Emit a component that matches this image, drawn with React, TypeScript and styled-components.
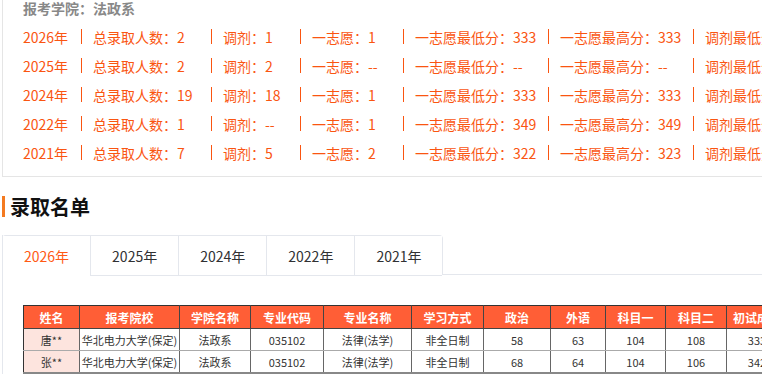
import React, { ReactElement, useState } from 'react'
import styled, { createGlobalStyle } from 'styled-components'

const GlobalStyle = createGlobalStyle`
  html, body {
    margin: 0;
    padding: 0;
    background: #fff;
    overflow: hidden;
  }
  body {
    font-family: "Noto Sans CJK SC", "Noto Sans", sans-serif;
    color: #333;
  }
`

const Page = styled.div`
  width: 762px;
  height: 385px;
  overflow: hidden;
  padding-left: 2px;
  box-sizing: border-box;
`

const StatCard = styled.div`
  border-left: 1px solid #e5e5e5;
  border-bottom: 1px solid #e5e5e5;
  padding: 0 0 9px 20px;
  width: 1000px;
`

const College = styled.div`
  font-size: 14px;
  font-weight: bold;
  color: #888;
  line-height: 16px;
  margin-bottom: 6px;
`

const StatRow = styled.div`
  display: flex;
  align-items: center;
  height: 29px;
  font-size: 14px;
  color: #fa5511;
  white-space: nowrap;
`

const StatItem = styled.span<{ $w?: number }>`
  display: inline-block;
  width: ${(p) => (p.$w ? `${p.$w}px` : 'auto')};
  flex-shrink: 0;
`

const Sep = styled.span`
  display: inline-block;
  width: 1px;
  height: 15px;
  background: #fa5511;
  margin: 0 11px 0 11px;
  flex-shrink: 0;
`

const Title = styled.h2`
  margin: 19px 0 18px 0;
  font-size: 20px;
  font-weight: bold;
  color: #111;
  line-height: 21px;
  border-left: 3px solid #f47a20;
  padding-left: 5px;
`

const Tabs = styled.div`
  border-left: 1px solid #e4e7ed;
`

const TabNav = styled.div`
  display: flex;
  border-bottom: 1px solid #e4e7ed;
  height: 39px;
  margin-left: -1px;
`

const TabList = styled.div`
  display: flex;
  border: 1px solid #e4e7ed;
  border-bottom: none;
  border-radius: 4px 4px 0 0;
  height: 40px;
  box-sizing: border-box;
`

const Tab = styled.div<{ $active: boolean }>`
  padding: 0 21px;
  height: 40px;
  line-height: 40px;
  font-size: 14px;
  color: ${(p) => (p.$active ? '#ff5a14' : '#303133')};
  border-left: 1px solid ${(p) => (p.$active ? 'transparent' : '#e4e7ed')};
  border-bottom: 1px solid ${(p) => (p.$active ? '#fff' : '#e4e7ed')};
  box-sizing: border-box;
  background: #fff;
  cursor: pointer;
  &:first-child {
    border-left: none;
  }
`

const Panel = styled.div`
  padding: 30px 0 0 20px;
`

const Table = styled.table`
  border-collapse: collapse;
  table-layout: fixed;
  width: 753px;
  font-size: 11px;
  border: 1px solid #333;
  border-bottom: 2px solid #888;
`

const Th = styled.th<{ $w: number }>`
  width: ${(p) => p.$w}px;
  background: #ff5e36;
  color: #fff;
  font-size: 12px;
  font-weight: bold;
  height: 22px;
  padding: 0;
  border-right: 1px solid #444;
  border-bottom: 1px solid #444;
  white-space: nowrap;
  overflow: hidden;
`

const Td = styled.td<{ $pink?: boolean }>`
  height: 21px;
  padding: 0;
  text-align: center;
  color: #333;
  background: ${(p) => (p.$pink ? '#fde4de' : '#fff')};
  border-right: 1px solid #666;
  border-bottom: 1px solid #aaa;
  white-space: nowrap;
  overflow: hidden;
`

type Stat = {
  year: string
  total: string
  adjust: string
  first: string
  min: string
  max: string
}

const stats: Stat[] = [
  { year: '2026', total: '2', adjust: '1', first: '1', min: '333', max: '333' },
  { year: '2025', total: '2', adjust: '2', first: '--', min: '--', max: '--' },
  { year: '2024', total: '19', adjust: '18', first: '1', min: '333', max: '333' },
  { year: '2022', total: '1', adjust: '--', first: '1', min: '349', max: '349' },
  { year: '2021', total: '7', adjust: '5', first: '2', min: '322', max: '323' },
]

const columns: [string, number][] = [
  ['姓名', 55],
  ['报考院校', 99],
  ['学院名称', 70],
  ['专业代码', 72],
  ['专业名称', 87],
  ['学习方式', 71],
  ['政治', 66],
  ['外语', 54],
  ['科目一', 59],
  ['科目二', 60],
  ['初试成绩', 60],
]

const students = [
  ['唐**', '华北电力大学(保定)', '法政系', '035102', '法律(法学)', '非全日制', '58', '63', '104', '108', '333'],
  ['张**', '华北电力大学(保定)', '法政系', '035102', '法律(法学)', '非全日制', '68', '64', '104', '106', '342'],
]

function App(): ReactElement {
  const [active, setActive] = useState('2026')
  return (
    <Page>
      <GlobalStyle />
      <StatCard>
        <College>报考学院：法政系</College>
        {stats.map((s) => (
          <StatRow key={s.year}>
            <StatItem $w={47}>{s.year}年</StatItem>
            <Sep />
            <StatItem $w={107}>总录取人数：{s.total}</StatItem>
            <Sep />
            <StatItem $w={66}>调剂：{s.adjust}</StatItem>
            <Sep />
            <StatItem $w={80}>一志愿：{s.first}</StatItem>
            <Sep />
            <StatItem $w={122}>一志愿最低分：{s.min}</StatItem>
            <Sep />
            <StatItem $w={122}>一志愿最高分：{s.max}</StatItem>
            <Sep />
            <StatItem>调剂最低分：--</StatItem>
          </StatRow>
        ))}
      </StatCard>
      <Title>录取名单</Title>
      <Tabs>
        <TabNav>
          <TabList>
            {stats.map((s) => (
              <Tab key={s.year} $active={active === s.year} onClick={() => setActive(s.year)}>
                {s.year}年
              </Tab>
            ))}
          </TabList>
        </TabNav>
        <Panel>
          <Table>
            <thead>
              <tr>
                {columns.map(([name, w]) => (
                  <Th key={name} $w={w}>
                    {name}
                  </Th>
                ))}
              </tr>
            </thead>
            <tbody>
              {students.map((row) => (
                <tr key={row[0]}>
                  {row.map((cell, i) => (
                    <Td key={i} $pink={i === 0}>
                      {cell}
                    </Td>
                  ))}
                </tr>
              ))}
            </tbody>
          </Table>
        </Panel>
      </Tabs>
    </Page>
  )
}

export default App
